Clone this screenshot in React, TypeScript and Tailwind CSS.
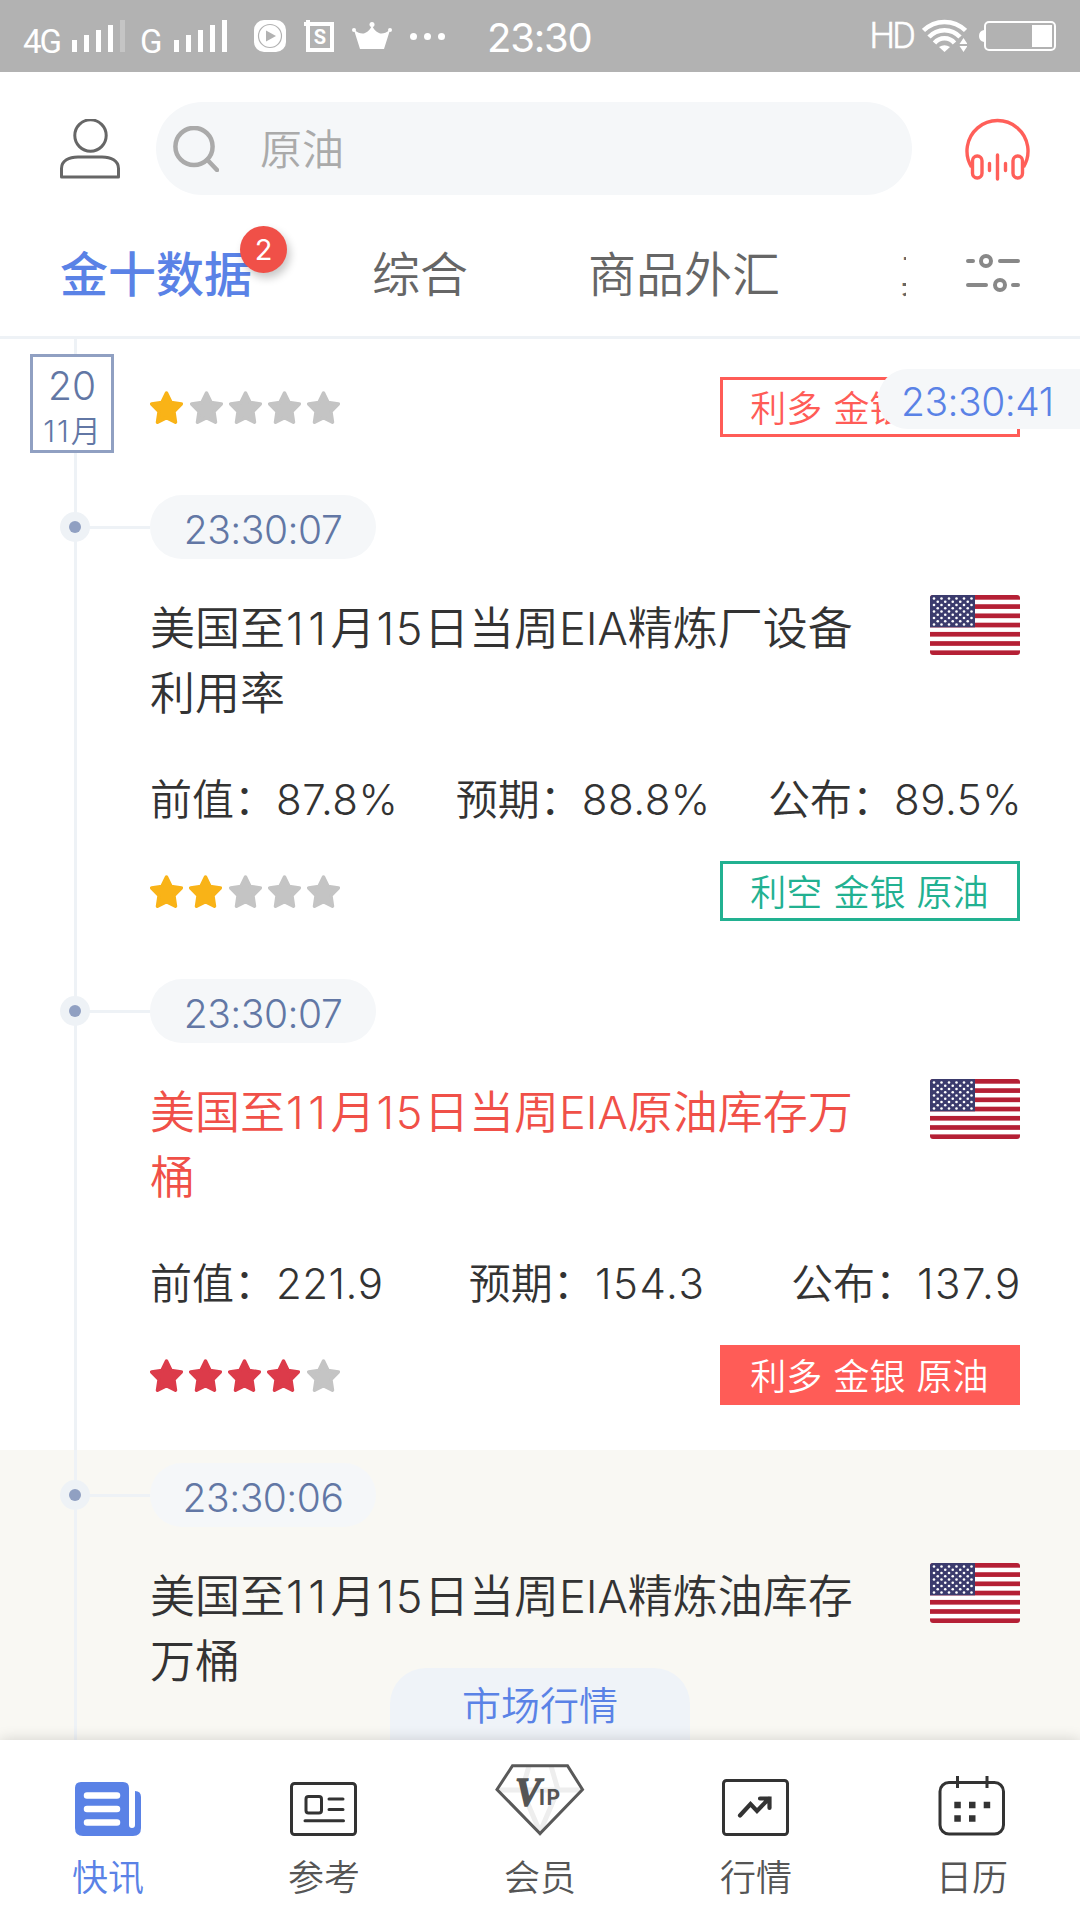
import type { ReactNode } from "react";
import clsx from "clsx";

type Tone = "bull" | "bear" | "bullSolid";

interface NewsItem {
  time: string;
  title: string;
  important?: boolean;
  highlighted?: boolean;
  values?: { label: string; value: string }[];
  stars?: number;
  tag?: { text: string; tone: Tone };
}

const items: NewsItem[] = [
  {
    time: "23:30:07",
    title: "美国至11月15日当周EIA精炼厂设备利用率",
    values: [
      { label: "前值", value: "87.8%" },
      { label: "预期", value: "88.8%" },
      { label: "公布", value: "89.5%" },
    ],
    stars: 2,
    tag: { text: "利空 金银 原油", tone: "bear" },
  },
  {
    time: "23:30:07",
    title: "美国至11月15日当周EIA原油库存万桶",
    important: true,
    values: [
      { label: "前值", value: "221.9" },
      { label: "预期", value: "154.3" },
      { label: "公布", value: "137.9" },
    ],
    stars: 4,
    tag: { text: "利多 金银 原油", tone: "bullSolid" },
  },
  {
    time: "23:30:06",
    title: "美国至11月15日当周EIA精炼油库存万桶",
    highlighted: true,
  },
];

function Signal({ weak }: { weak?: boolean }) {
  return (
    <div className="flex h-8 items-end gap-[7px]">
      <i className="h-3 w-[5px] bg-white" />
      <i className="h-[17px] w-[5px] bg-white" />
      <i className="h-[22px] w-[5px] bg-white" />
      <i className="h-[27px] w-[5px] bg-white" />
      <i className={clsx("h-8 w-[5px]", weak ? "bg-[#c5c5c5]" : "bg-white")} />
    </div>
  );
}

function StatusBar() {
  return (
    <div className="flex h-[72px] items-center bg-[#b2b2b2] pl-[23px] text-white">
      <span className="w-[49px] pt-[10px] font-[Roboto] text-[33px] leading-none tracking-[-2px]">4G</span>
      <Signal weak />
      <span className="ml-[15px] w-[34px] pt-[10px] font-[Roboto] text-[33px] leading-none">G</span>
      <Signal />
      <svg className="ml-[27px]" width="32" height="32" viewBox="0 0 32 32">
        <rect width="32" height="32" rx="10" fill="#fff" />
        <circle cx="16" cy="16" r="11.5" fill="none" stroke="#b2b2b2" strokeWidth="1.2" />
        <path d="M12 10.500l10 5.500-10 5.500z" fill="#b2b2b2" />
      </svg>
      <svg className="ml-[18px]" width="30" height="32" viewBox="0 0 30 32">
        <path d="M0 4h28v26H4V0" fill="none" stroke="#fff" strokeWidth="4" />
        <text x="16" y="24" textAnchor="middle" fill="#fff" fontSize="20" fontWeight="700" fontFamily="Roboto, sans-serif">
          S
        </text>
      </svg>
      <svg className="ml-[18px]" width="40" height="28" viewBox="0 0 40 28">
        <path d="M2 8q7 5 11 3 5-2 7-8 2 6 7 8 4 2 11-3l-6 19H8z" fill="#fff" />
        <circle cx="2" cy="8" r="2" fill="#fff" />
        <circle cx="20" cy="2.500" r="2.500" fill="#fff" />
        <circle cx="38" cy="8" r="2" fill="#fff" />
      </svg>
      <div className="ml-[18px] flex gap-[7px]">
        <i className="size-[7px] rounded-full bg-white" />
        <i className="size-[7px] rounded-full bg-white" />
        <i className="size-[7px] rounded-full bg-white" />
      </div>
      <span className="ml-[42px] pt-[3px] text-[40px] leading-none tracking-[-1.200px]">23:30</span>
      <div className="ml-auto flex items-center pr-6">
        <span className="mr-[9px] font-[Roboto] text-[36px] leading-none font-light tracking-[-2.800px] [-webkit-text-stroke:0.600px_white]">
          HD
        </span>
        <svg className="mr-3" width="45" height="34" viewBox="0 0 45 34">
          <g fill="none" stroke="#fff" strokeWidth="4.500">
            <path d="M1.500 11.500a30 30 0 0 1 42 0" />
            <path d="M7 18a21 21 0 0 1 31 0" />
            <path d="M12.500 24a13 13 0 0 1 20 0" />
          </g>
          <path d="M22.500 33l-5.500-5q5.500-3.500 11 0z" fill="#fff" />
          <path d="M41.500 19l4 6h-8zM41.500 33l4-6h-8z" fill="#fff" />
        </svg>
        <svg width="77" height="30" viewBox="0 0 77 30">
          <path d="M5 9q-5 1-5 6t5 6z" fill="#fff" />
          <rect x="6" y="1" width="70" height="28" rx="4" fill="none" stroke="#fff" strokeWidth="2" />
          <rect x="53" y="4" width="20" height="22" fill="#fff" />
        </svg>
      </div>
    </div>
  );
}

function SearchRow() {
  return (
    <div className="flex items-center pt-[30px] pl-[60px]">
      <svg width="60" height="60" viewBox="0 0 60 60" fill="none" stroke="#666" strokeWidth="3">
        <circle cx="30.500" cy="16.500" r="15.700" />
        <path d="M1.500 58V49.500C1.500 41.500 9 38 18 38h24c9 0 16.500 3.500 16.500 11.500V58z" strokeLinejoin="round" />
      </svg>
      <div className="ml-9 flex h-[93px] w-[756px] shrink-0 items-center rounded-full bg-[#f5f7f9] pl-[17px]">
        <svg width="46" height="46" viewBox="0 0 46 46" fill="none" stroke="#aaa" strokeWidth="4.500">
          <circle cx="21" cy="20.500" r="18.600" />
          <path d="M34.500 34l9.500 10" strokeLinecap="round" />
        </svg>
        <span className="ml-[41px] pt-[2px] text-[42px] leading-none font-[350] text-[#aaa]">原油</span>
      </div>
      <svg className="ml-[52px] shrink-0" width="66" height="64" viewBox="0 0 66 64" fill="none" stroke="#ff5f59" strokeWidth="3.400">
        <path d="M7.500 50A30.500 30.500 0 1 1 59.500 50" />
        <rect x="8.500" y="39" width="9.500" height="22" rx="4.700" />
        <rect x="49" y="39" width="9.500" height="22" rx="4.700" />
        <path d="M25.500 46.500v7M33.500 38v24M41.500 46.500v7" strokeLinecap="round" />
      </svg>
    </div>
  );
}

function Tabs() {
  return (
    <div className="flex h-[144px] items-center border-b-3 border-[#eef2f6] pt-[14px] pl-[60px] text-[48px] leading-none text-[#666]">
      <div className="flex w-[846px] gap-[120px] overflow-hidden pt-9 pb-8 whitespace-nowrap">
        <div className="relative font-medium text-[#5a82e6]">
          金十数据
          <span className="absolute -top-[25px] left-[180px] flex size-[47px] items-center justify-center rounded-full bg-[#f05048] text-[29px] font-normal text-white shadow-[3px_5px_8px_rgba(0,0,0,0.22)]">
            2
          </span>
        </div>
        <span className="font-[350]">综合</span>
        <span className="font-[350]">商品外汇</span>
        <span className="font-[350]">其他</span>
      </div>
      <svg className="ml-[60px]" width="54" height="42" viewBox="0 0 54 42" fill="none" stroke="#888" strokeWidth="4" strokeLinecap="round">
        <path d="M2 9h5M34 9h18M2 33h18M47 33h5" />
        <circle cx="20" cy="9" r="5" />
        <circle cx="34" cy="33" r="5" />
      </svg>
    </div>
  );
}

function Stars({ count }: { count: number }) {
  return (
    <div className="flex gap-[6px]">
      {[0, 1, 2, 3, 4].map((i) => (
        <svg
          key={i}
          width="33"
          height="33"
          viewBox="0 0 33 33"
          strokeWidth="3.500"
          strokeLinejoin="round"
          className={clsx(
            i >= count && "translate-x-px fill-[#c4c4c4] stroke-[#c4c4c4]",
            i < count && count > 3 && "fill-[#dc3b4a] stroke-[#dc3b4a]",
            i < count && count <= 3 && "fill-[#f9b317] stroke-[#f9b317]"
          )}
        >
          <path d="M16.500 2l4.600 9.400 10.200 1.500-7.400 7.500 1.600 10.800-9-4.600-9 4.600 1.600-10.800-7.400-7.500 10.200-1.500z" />
        </svg>
      ))}
    </div>
  );
}

function Tag({ text, tone }: { text: string; tone: Tone }) {
  return (
    <div
      className={clsx(
        "flex h-[60px] w-[300px] items-center justify-center border-3 pt-1 pr-px text-[36px] leading-none font-[350] whitespace-nowrap [word-spacing:1px]",
        tone === "bull" && "border-[#ff5c57] text-[#ff5c57]",
        tone === "bear" && "border-[#22b191] text-[#22b191]",
        tone === "bullSolid" && "border-[#ff5c57] bg-[#ff5c57] text-white"
      )}
    >
      {text}
    </div>
  );
}

function UsFlag() {
  const stars: ReactNode[] = [];
  for (let row = 0; row < 9; row++) {
    for (let col = 0; col < (row % 2 ? 5 : 6); col++) {
      stars.push(<circle key={`${row}-${col}`} cx={4 + col * 7.5 + (row % 2 ? 3.75 : 0)} cy={3.5 + row * 3.25} r="1.3" />);
    }
  }
  return (
    <svg className="mt-[-1px] rounded-[3px]" width="90" height="60" viewBox="0 0 90 60">
      <rect width="90" height="60" fill="#fff" />
      {[0, 1, 2, 3, 4, 5, 6].map((i) => (
        <rect key={i} y={i * 9.23} width="90" height="4.700" fill="#b52035" />
      ))}
      <rect width="45" height="32.300" fill="#3b3b6d" />
      <g fill="#fff">{stars}</g>
    </svg>
  );
}

// Left gutter with the vertical line; the node is drawn only where an entry starts
function Rail({ node }: { node?: boolean }) {
  return (
    <div className="relative w-[150px] shrink-0">
      <div className="ml-[74px] h-full w-[3px] bg-[#eef2f6]" />
      {node && (
        <>
          <div className="absolute top-[44px] left-[75px] h-[3px] w-[75px] bg-[#eef2f6]" />
          <div className="absolute top-[30px] left-[60px] flex size-[30px] items-center justify-center rounded-full bg-[#eef2f6]">
            <div className="size-3 rounded-full bg-[#90a0c2]" />
          </div>
        </>
      )}
    </div>
  );
}

// Opens up the digits, "11" sets too tight next to the CJK glyphs
function Title({ text }: { text: string }) {
  return text.split(/(\d+)/).map((part, i) => {
    if (i % 2 === 0) return part;
    return (
      <span key={i} className={part === "11" ? "ml-[1px] tracking-[4.500px]" : "ml-[1px] tracking-[1.500px]"}>
        {part}
      </span>
    );
  });
}

function Entry({ item }: { item: NewsItem }) {
  return (
    <div className={clsx("flex h-[484px] shrink-0", item.highlighted && "bg-[#f9f8f3]")}>
      <Rail node />
      <div className="flex w-[870px] flex-col pt-[13px] pb-[45px]">
        <div className="flex h-16 w-[226px] items-center justify-center rounded-full bg-[#f5f7f9] pt-1 text-[39px] leading-none font-light tracking-[-0.500px] text-[#6277a5]">
          {item.time}
        </div>
        <div className="mt-[37px] flex items-start justify-between">
          <h2
            className={clsx(
              "w-[720px] text-[45px] leading-[65px] font-[350] break-all",
              item.important ? "text-[#f05048]" : "text-[#333]"
            )}
          >
            <Title text={item.title} />
          </h2>
          <UsFlag />
        </div>
        {item.values && (
          <div className="-mr-[2px] mt-[44px] flex justify-between text-[42px] leading-[60px] font-[350] text-[#333]">
            {item.values.map((v) => (
              <span key={v.label}>
                {v.label}：
                <span className={v.value.startsWith("1") ? "tracking-[1.600px]" : "tracking-[0.500px]"}>{v.value}</span>
              </span>
            ))}
          </div>
        )}
        {item.tag && (
          <div className="mt-auto flex items-center justify-between">
            <Stars count={item.stars ?? 0} />
            <Tag text={item.tag.text} tone={item.tag.tone} />
          </div>
        )}
      </div>
    </div>
  );
}

function NavIcon({ children }: { children: ReactNode }) {
  return (
    <svg width="90" height="72" viewBox="0 0 90 72" fill="none" stroke="#333" strokeWidth="3">
      {children}
    </svg>
  );
}

const navItems = [
  {
    label: "快讯",
    icon: (
      <NavIcon>
        <path
          d="M18 18h42q6 0 6 6v37a3 3 0 0 0 6 0V27q6 0 6 6v31q0 8-8 8H20q-8 0-8-8V24q0-6 6-6z"
          fill="#5a82e6"
          stroke="none"
        />
        <path d="M24 31.500h30M24 45h30M24 58.500h30" stroke="#fff" strokeWidth="6.500" strokeLinecap="round" />
      </NavIcon>
    ),
  },
  {
    label: "参考",
    icon: (
      <NavIcon>
        <rect x="12.500" y="19.500" width="64" height="51" rx="3" />
        <rect x="27" y="32.500" width="15.500" height="16.500" rx="2.500" />
        <path d="M50 35h14M50 45.500h14M26 56.800h38.500" strokeLinecap="round" />
      </NavIcon>
    ),
  },
  {
    label: "会员",
    icon: (
      <NavIcon>
        <path d="M3 26h84M34 2L27 26 45 68 63 26 56 2" stroke="#eee" strokeWidth="5" />
        <path d="M17.500 1.800h55L87.500 25.500 45 69.500 2 25.500z" stroke="#595959" />
        <text
          x="20"
          y="40.5"
          fill="#555"
          stroke="#555"
          strokeWidth="1.5"
          fontSize="39"
          fontWeight="700"
          fontStyle="italic"
          fontFamily="Liberation Serif, serif"
        >
          V
        </text>
        <text x="44" y="41" fill="#555" stroke="none" fontSize="21" fontWeight="700" fontFamily="Inter, sans-serif" letterSpacing="1.5">
          IP
        </text>
      </NavIcon>
    ),
  },
  {
    label: "行情",
    icon: (
      <NavIcon>
        <rect x="12.500" y="16.500" width="64" height="54" rx="3" />
        <path d="M29 51.500l10.500-11.500 6.500 7L58 34.500M49 34.500h9.500v9.500" strokeWidth="4.200" strokeLinecap="round" />
      </NavIcon>
    ),
  },
  {
    label: "日历",
    icon: (
      <NavIcon>
        <rect x="13" y="18.500" width="63.500" height="51.500" rx="9" />
        <path d="M30.500 12v12M60 12v12" />
        <path d="M27.300 41h6.500M42 41h6.500M56.700 41h6.500M27.300 54.500h6.500M42 54.500h6.500" strokeWidth="6.500" />
      </NavIcon>
    ),
  },
];

export default function App() {
  return (
    <div className="flex h-[1920px] w-[1080px] flex-col overflow-hidden bg-white font-[Inter,'Noto_Sans_CJK_SC',sans-serif]">
      <StatusBar />
      <SearchRow />
      <Tabs />

      <main className="relative flex h-[1401px] flex-col overflow-hidden">
        <div className="flex h-[143px] shrink-0">
          <Rail />
          <div className="flex w-[870px] items-end justify-between pb-[45px]">
            <div className="pb-[13px]">
              <Stars count={1} />
            </div>
            <Tag text="利多 金银 原油" tone="bull" />
          </div>
        </div>
        {items.map((item, i) => (
          <Entry key={i} item={item} />
        ))}

        <div className="absolute top-[15px] left-[30px] flex h-[99px] w-[84px] flex-col items-center border-3 border-[#90a0c2] bg-white pt-[9px] font-[350] text-[#6277a5]">
          <span className="text-[39px] leading-[39px] font-light">20</span>
          <span className="mt-[9px] text-[30px] leading-[34px]">
            <span className="tracking-[2px]">11</span>月
          </span>
        </div>
        <div className="absolute top-[30px] right-0 flex h-[60px] w-[202px] items-center rounded-l-full bg-[#f5f7f9] pt-1 pl-[23px] text-[39px] leading-none font-light tracking-[-0.500px] text-[#5a82e6]">
          23:30:41
        </div>
        <div className="absolute bottom-0 left-[390px] flex h-[72px] w-[300px] items-center justify-center rounded-t-[36px] bg-[#eff3f8] pt-[2px] text-[39px] leading-none font-[350] text-[#5a82e6]">
          市场行情
        </div>
      </main>

      <nav className="relative grid h-[180px] grid-cols-5 bg-white shadow-[0_0_14px_rgba(0,0,0,0.16)]">
        {navItems.map((n, i) => (
          <div key={n.label} className="flex flex-col items-center pt-6">
            {n.icon}
            <span className={clsx("mt-[24px] text-[36px] leading-none font-[350]", i === 0 ? "text-[#5a82e6]" : "text-[#555]")}>
              {n.label}
            </span>
          </div>
        ))}
      </nav>
    </div>
  );
}
